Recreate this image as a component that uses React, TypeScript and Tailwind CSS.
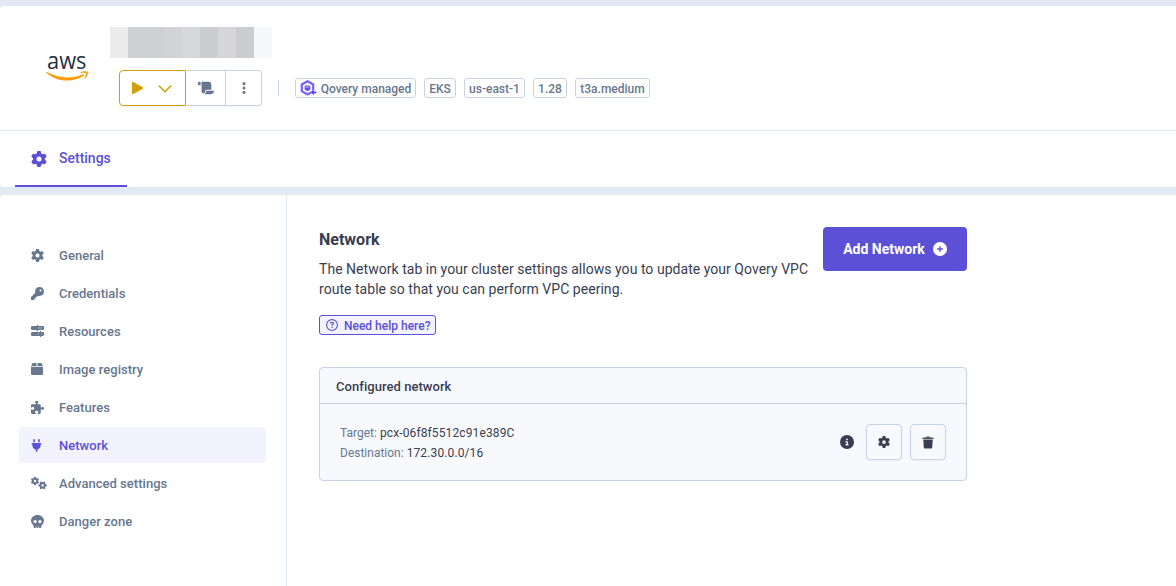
import type { ReactNode } from 'react';
import {
  FaCircleInfo, FaCirclePlus, FaEllipsisVertical, FaGear, FaGears, FaKey,
  FaPlug, FaPuzzlePiece, FaRegCircleQuestion, FaScroll, FaSkull, FaTrash,
} from 'react-icons/fa6';

const mosaic = [
  'w-[18px] bg-[#ebebeb]', 'w-[19px] bg-[#cfd0d4]', 'w-[17px] bg-[#cdd1d4]', 'w-[18px] bg-[#d3d3d5]',
  'w-[18px] bg-[#d6d7db]', 'w-[18px] bg-[#cccdd1]', 'w-[18px] bg-[#d6d6d8]', 'w-[18px] bg-[#cccdd0]', 'w-[18px] bg-[#f6f7fa]',
];

function AwsLogo() {
  return (
    <svg width="44" height="46" viewBox="0 -12 44 46" aria-label="AWS">
      <text x="1" y="14.500" fontFamily="Open Sans, sans-serif" fontSize="23.500" fontWeight="500" textLength="39.5" lengthAdjust="spacingAndGlyphs" fill="#252f3e">aws</text>
      <g transform="translate(0 1.500) scale(.1385)" fill="#ff9900">
        <path d="M273.5 143.7c-32.9 24.3-80.7 37.2-121.8 37.2-57.6 0-109.5-21.3-148.7-56.7-3.1-2.8-.3-6.6 3.4-4.4 42.4 24.6 94.7 39.5 148.8 39.5 36.5 0 76.6-7.6 113.5-23.2 5.5-2.5 10.2 3.6 4.8 7.6z" />
        <path d="M287.2 128.1c-4.2-5.4-27.8-2.6-38.5-1.3-3.2.4-3.7-2.4-.8-4.5 18.8-13.2 49.7-9.4 53.3-5 3.6 4.5-1 35.4-18.6 50.2-2.7 2.3-5.3 1.1-4.1-1.9 4-9.9 12.9-32.2 8.7-37.5z" />
      </g>
    </svg>
  );
}

function QoveryIcon() {
  return (
    <svg className="shrink-0" width="17" height="16" viewBox="0 0 17 16">
      <path d="M7.500 1.300l5.700 3.200v6.600l-5.700 3.300-5.700-3.300V4.500z" fill="none" stroke="#7561ff" strokeWidth="2.200" />
      <path d="M7.500 4.700l2.900 1.600v3.300l-2.900 1.600-2.900-1.600V6.300z" fill="#6a4ff5" />
      <path d="M5.500 7h4M7.500 5v1.600" stroke="#c9c1ff" strokeWidth=".8" />
      <path d="M10.800 12.300L14 9.500v2h2.500v2H14v2z" fill="#5b30f6" stroke="#fff" strokeWidth=".3" />
    </svg>
  );
}

function SlidersIcon() {
  return (
    <svg width="13" height="12" viewBox="0 0 13 12">
      <rect y="1" width="13" height="4" rx="1.300" fill="currentColor" />
      <rect y="7" width="13" height="4" rx="1.300" fill="currentColor" />
      <path d="M7 3h4M6.500 9h1.500M10 9h1" stroke="#c3cbd8" strokeWidth=".8" />
      <path d="M6.500 0v6M9.500 6v6" stroke="currentColor" strokeWidth="1" />
    </svg>
  );
}

function BoxIcon() {
  return (
    <svg width="12" height="12" viewBox="0 0 12 12" fill="currentColor">
      <path d="M2.200 0H5.500V3H.3L1 .8Q1.400 0 2.200 0zM6.500 0H9.800Q10.600 0 11 .8L11.700 3H6.500z" />
      <path d="M0 3.800H12V10.500Q12 12 10.500 12H1.500Q0 12 0 10.500z" />
    </svg>
  );
}

const items: { label: string; icon: ReactNode; active?: boolean }[] = [
  { label: 'General', icon: <FaGear size={13} /> },
  { label: 'Credentials', icon: <FaKey size={13} /> },
  { label: 'Resources', icon: <SlidersIcon /> },
  { label: 'Image registry', icon: <BoxIcon /> },
  { label: 'Features', icon: <FaPuzzlePiece size={13} /> },
  { label: 'Network', icon: <FaPlug size={13} className="-ml-[1.5px]" />, active: true },
  { label: 'Advanced settings', icon: <FaGears size={16} /> },
  { label: 'Danger zone', icon: <FaSkull size={13} /> },
];

function Tag({ children, className }: { children: ReactNode; className: string }) {
  return (
    <span className={`flex h-5 items-center justify-center rounded-[3px] border border-[#c6d3e7] text-xs leading-none font-medium whitespace-nowrap text-[#67778e] ${className}`}>
      {children}
    </span>
  );
}

export default function App() {
  return (
    <div className="flex h-[586px] w-full flex-col overflow-hidden bg-[#e2e9f3] pt-1.5 font-['Roboto',sans-serif]">
      <header className="flex h-[181px] shrink-0 flex-col rounded-l-[4px] bg-white">
        <div className="flex h-[125px] shrink-0 border-b border-[#e2e9f3]">
          <div className="w-[110px] shrink-0 pt-9 pl-[46px]"><AwsLogo /></div>
          <div className="flex flex-col pt-[21px]">
            <div className="flex h-[31px]">
              {mosaic.map((c, i) => <div key={i} className={c} />)}
            </div>
            <div className="mt-3 ml-[9px] flex h-9 items-center">
              <div className="flex h-9 rounded-[4px] shadow-[0_1px_2px_rgba(0,0,0,0.05)]">
                <button className="flex w-[67px] items-center rounded-l-[4px] border border-[#d1a00c] pl-[11px] text-[#d1a00c]">
                  <svg width="13" height="14" viewBox="0 0 12 13"><path d="M.8 1.500V11.500Q1 12.700 2.200 12L10.900 7.300Q11.700 6.500 10.900 5.700L2.200 1Q1 .3.8 1.500z" fill="currentColor" /></svg>
                  <svg className="mt-0.5 ml-3.5" width="14" height="8" viewBox="0 0 14 8" fill="none" stroke="currentColor" strokeWidth="1.600" strokeLinecap="round" strokeLinejoin="round"><path d="M1.200 1L7 6.800 12.800 1" /></svg>
                </button>
                <button className="flex w-10 items-center justify-center border-y border-r border-[#c6d3e7] text-[#67778e]"><FaScroll size={16} /></button>
                <button className="flex w-9 items-center justify-center rounded-r-[4px] border-y border-r border-[#c6d3e7] text-[#67778e]"><FaEllipsisVertical size={14} /></button>
              </div>
              <div className="mr-4 ml-4 h-4 w-px bg-[#c6d3e7]" />
              <div className="flex gap-2">
                <Tag className="w-[121px] gap-1"><QoveryIcon /><span className="pt-px">Qovery managed</span></Tag>
                <Tag className="w-8 pt-px">EKS</Tag>
                <Tag className="w-[61px] pt-px">us-east-1</Tag>
                <Tag className="w-[34px] pt-px">1.28</Tag>
                <Tag className="w-[75px] pt-px">t3a.medium</Tag>
              </div>
            </div>
          </div>
        </div>
        <nav className="flex flex-1 pl-[15px]">
          <a className="flex w-28 items-center gap-3 border-b-2 border-[#5b50d6] pl-4 text-sm font-medium text-[#5b50d6]">
            <FaGear size={16} className="mt-0.5" />Settings
          </a>
        </nav>
      </header>
      <main className="mt-2 flex flex-1 rounded-tl-[4px] bg-white">
        <aside className="flex w-[287px] shrink-0 flex-col gap-0.5 border-r border-[#e2e9f3] pt-[42px] pr-5 pl-[19px]">
          {items.map(({ label, icon, active }) => (
            <a key={label} className={`flex h-9 items-center rounded-[4px] pl-3 text-[13px] font-medium tracking-[0.03px] ${active ? 'bg-[#f2f3fe] text-[#5b50d6]' : 'text-[#67778e]'}`}>
              <span className="w-7 shrink-0">{icon}</span><span className="pt-0.5">{label}</span>
            </a>
          ))}
        </aside>
        <section className="w-[680px] pt-8 pl-8">
          <div className="flex h-[140px] items-start justify-between">
            <div className="text-[#383e50]">
              <h1 className="pt-px text-base leading-6 font-bold">Network</h1>
              <p className="mt-[7px] w-[496px] text-sm leading-5 tracking-[0.035px]">The Network tab in your cluster settings allows you to update your Qovery VPC<br />route table so that you can perform VPC peering.</p>
              <a className="mt-4 flex h-5 w-[117px] items-center gap-1.5 rounded-[3px] border border-[#5b50d6] bg-[#f2f3fe] pl-1.5 text-xs font-medium whitespace-nowrap text-[#5b50d6]">
                <FaRegCircleQuestion size={12} className="shrink-0" /><span className="pt-0.5">Need help here?</span>
              </a>
            </div>
            <button className="flex h-11 w-36 shrink-0 items-center justify-center gap-2 rounded-[4px] bg-[#5b50d6] text-sm font-bold text-white">
              Add Network<FaCirclePlus size={14} />
            </button>
          </div>
          <div className="h-[114px] rounded-[4px] border border-[#c6d3e7] bg-[#f8f9fd]">
            <h2 className="flex h-9 items-center border-b border-[#c6d3e7] pt-0.5 pl-4 text-[13px] font-medium tracking-[0.05px] text-[#383e50]">Configured network</h2>
            <div className="flex h-[76px] items-center justify-between pr-5 pl-5">
              <div className="pt-0.5 text-xs leading-5 text-[#67778e]">
                <p>Target: <span className="tracking-[0.12px] text-[#383e50]">pcx-06f8f5512c91e389C</span></p>
                <p>Destination: <span className="tracking-[0.12px] text-[#383e50]">172.30.0.0/16</span></p>
              </div>
              <div className="flex items-center text-[#383e50]">
                <FaCircleInfo size={14} className="mr-3" />
                <button className="mr-2 flex size-9 items-center justify-center rounded-[4px] border border-[#c6d3e7] shadow-[0_1px_2px_rgba(0,0,0,0.05)]"><FaGear size={12} /></button>
                <button className="flex size-9 items-center justify-center rounded-[4px] border border-[#c6d3e7] shadow-[0_1px_2px_rgba(0,0,0,0.05)]">
                  <svg width="12" height="13" viewBox="0 0 12 13" fill="currentColor"><path d="M.5 1.500H3.800L4.300.5H7.700L8.200 1.500H11.500V2.900H.5z" opacity=".85" /><path d="M1.300 3.600H10.700L10.200 11.300Q10.100 12.500 9 12.500H3Q1.900 12.500 1.800 11.300z" /></svg>
                </button>
              </div>
            </div>
          </div>
        </section>
      </main>
    </div>
  );
}
